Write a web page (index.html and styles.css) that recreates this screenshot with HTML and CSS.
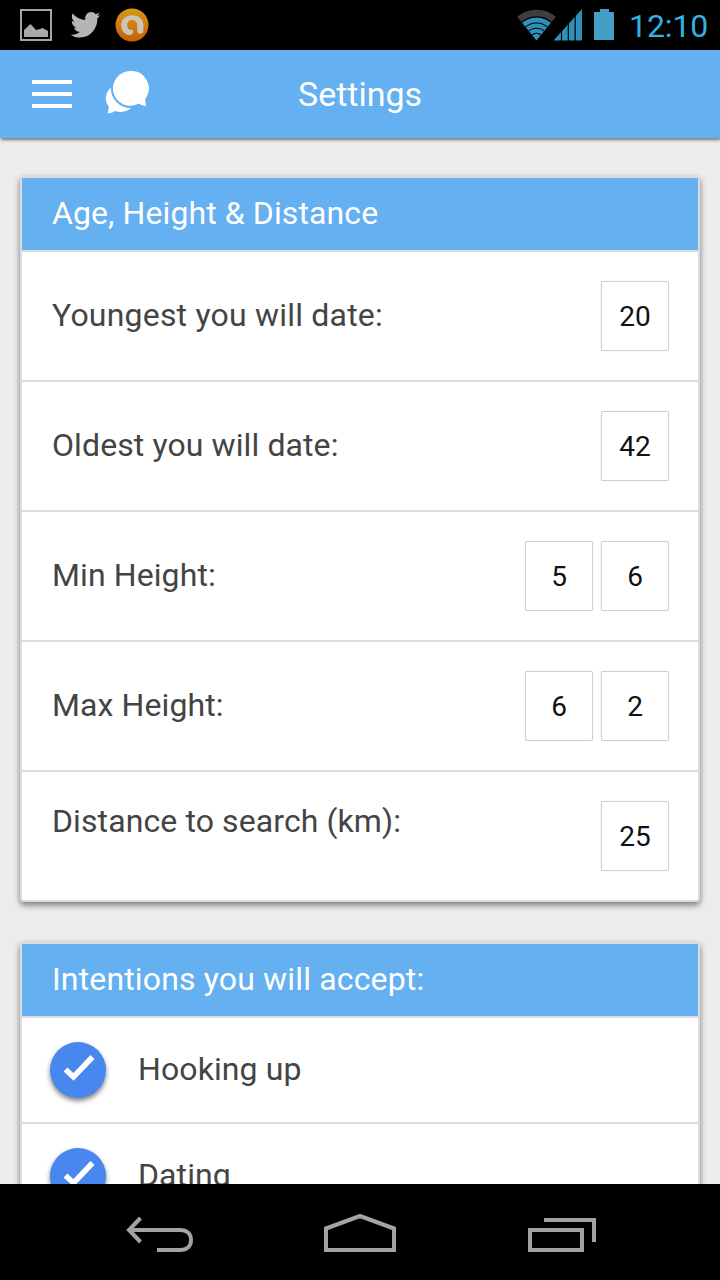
FILE: index.html
```html
<!DOCTYPE html>
<html lang="en">
<head>
<meta charset="utf-8">
<title>Settings</title>
<link rel="stylesheet" href="styles.css">
</head>
<body>
<div class="statusbar">
  <svg class="status-left" width="160" height="50" viewBox="0 0 160 50">
    <rect x="21" y="10" width="30" height="30" fill="none" stroke="#a5a5a5" stroke-width="2"/>
    <path d="M24 37v-7l6.500-6 5.500 6 2.500-.5 4-1.500 5.500 3v6z" fill="#a9a9a9"/>
    <path transform="translate(69.400 8.300) scale(1.310 1.380)" fill="#b5b5b5" d="M23.640 4.937c-.835.370-1.732.620-2.675.733.962-.576 1.700-1.490 2.048-2.578-.900.534-1.897.922-2.958 1.130-.850-.904-2.060-1.470-3.400-1.470-2.572 0-4.658 2.086-4.658 4.660 0 .364.042.718.120 1.060-3.873-.195-7.304-2.050-9.602-4.868-.400.690-.630 1.490-.630 2.342 0 1.616.823 3.043 2.072 3.878-.764-.025-1.482-.234-2.110-.583v.060c0 2.257 1.605 4.140 3.737 4.568-.392.106-.803.162-1.227.162-.300 0-.593-.028-.877-.082.593 1.850 2.313 3.198 4.352 3.234-1.595 1.250-3.604 1.995-5.786 1.995-.376 0-.747-.022-1.112-.065 2.062 1.323 4.510 2.093 7.140 2.093 8.570 0 13.255-7.098 13.255-13.254 0-.200-.005-.402-.014-.602.910-.658 1.700-1.477 2.323-2.410z"/>
    <defs><linearGradient id="orange" x1="0" y1="0" x2="0" y2="1"><stop offset="0" stop-color="#d69a12"/><stop offset="1" stop-color="#c85f06"/></linearGradient></defs>
    <circle cx="132" cy="25" r="16.500" fill="url(#orange)"/>
    <path d="M132.500 29.500c-3.500 1-5.300-1.500-5.300-4.300 0-3 2-5.200 5-5.200s5 2.200 5 5.200v5.300c0 2.200 1 3.300 3 3.300 2.200 0 3.200-1.200 3.200-3.800v-5c0-6-4.700-9.800-11.200-9.800-6.300 0-11 4.300-11 10.100 0 5.500 3.500 9.700 8.500 9.700 3.200 0 4.500-3.500 2.800-5.500z" fill="#cbc4bc"/>
  </svg>
  <div class="status-right">
    <svg width="100" height="32" viewBox="516 9 100 32">
      <defs><clipPath id="fan"><path d="M536.500 40.500 516.500 16V9h40v7z"/></clipPath></defs>
      <g clip-path="url(#fan)" fill="none">
        <circle cx="536.500" cy="40" r="27" stroke="#3e3e3e" stroke-width="6.500"/>
        <circle cx="536.500" cy="40" r="22.500" fill="#2f91b9"/>
        <g stroke="#000" stroke-width="1.100"><circle cx="536.500" cy="40" r="17"/><circle cx="536.500" cy="40" r="11.800"/><circle cx="536.500" cy="40" r="6.800"/></g>
      </g>
      <path d="M553.500 40.500 582 9v31.500z" fill="#2f91b9"/>
      <path d="M561.500 9v32M568.300 9v32M575.200 9v32" stroke="#000" stroke-width="1.200"/>
      <path d="M594 12h6V9h9v3h5v28h-20z" fill="#449fc6"/>
    </svg>
    <span class="clock">12:10</span>
  </div>
</div>
<main class="screen">
  <header class="appbar">
    <svg width="40" height="28" viewBox="0 0 40 28" fill="#fff"><path d="M0 0h40v4H0zM0 12h40v4H0zM0 24h40v4H0z"/></svg>
    <svg class="chat" width="44" height="44" viewBox="106 70 44 44" fill="#fff">
      <path d="M112.500 87c-4.500 3.500-6.300 9-5.400 14 .4 2 1.200 3.800 2.500 5.300.3 2-.1 4.500-1 7.300 2.500-.2 5.500-1.200 7.700-2.500 6 2 13 .8 17.500-5z"/>
      <circle cx="131.500" cy="88.300" r="19.700" fill="#64b0f0"/>
      <path d="M131.500 71a17.400 17.400 0 1 0 8.300 32.600c2.200 1.300 4.500 2.200 7.500 2.600-.9-2.500-1.100-5-.9-7.500A17.400 17.400 0 0 0 131.500 71z"/>
    </svg>
    <h1 class="title">Settings</h1>
  </header>
  <section class="card">
    <h2 class="card-title age">Age, Height &amp; Distance</h2>
    <div class="row"><span class="label youngest">Youngest you will date:</span><span class="value">20</span></div>
    <div class="row"><span class="label">Oldest you will date:</span><span class="value">42</span></div>
    <div class="row"><span class="label">Min Height:</span><span class="value">5</span><span class="value">6</span></div>
    <div class="row"><span class="label">Max Height:</span><span class="value">6</span><span class="value">2</span></div>
    <div class="row"><span class="label distance">Distance to search (km):</span><span class="value">25</span></div>
  </section>
  <section class="card">
    <h2 class="card-title intentions">Intentions you will accept:</h2>
    <div class="row option"><span class="check"><svg width="56" height="56" viewBox="0 0 56 56"><path d="m15.500 27.500 8 7.500 19-20" fill="none" stroke="#fff" stroke-width="5.500"/></svg></span><span class="label">Hooking up</span></div>
    <div class="row option"><span class="check"><svg width="56" height="56" viewBox="0 0 56 56"><path d="m15.500 27.500 8 7.500 19-20" fill="none" stroke="#fff" stroke-width="5.500"/></svg></span><span class="label">Dating</span></div>
  </section>
</main>
<nav class="navbar">
  <svg width="720" height="96" viewBox="0 1184 720 96" fill="none" stroke="#a3a3a3" stroke-width="4">
    <path d="m140.500 1218-11.500 12 11.500 12M129 1230h51c7 0 11 4 11 10s-4 10-11 10h-23"/>
    <path d="M326 1228.500 360 1216l34 12.500V1250h-68z"/>
    <path d="M530 1230h52v20h-52zM544 1220h50v22"/>
  </svg>
</nav>
</body>
</html>
```
FILE: styles.css
```css
* { box-sizing: border-box; }
body {
  margin: 0;
  width: 720px;
  height: 1280px;
  overflow: hidden;
  display: flex;
  flex-direction: column;
  font-family: Roboto, sans-serif;
  background: #000;
}
h1, h2 { margin: 0; font-weight: 400; }
svg { display: block; flex: none; }
.statusbar {
  height: 50px;
  flex: none;
  display: flex;
  justify-content: space-between;
  background: #000;
}
.status-right { display: flex; padding: 9px 11px 0 0; }
.clock {
  width: 80px;
  margin-left: 13px;
  line-height: 34px;
  font-size: 32px;
  letter-spacing: -.1px;
  color: #35b0e0;
  white-space: nowrap;
}
.screen {
  height: 1134px;
  flex: none;
  overflow: hidden;
  background: #ececec;
}
.appbar {
  height: 88px;
  margin-bottom: 38px;
  padding-left: 32px;
  display: flex;
  align-items: center;
  background: #64b0f0;
  box-shadow: 1px 2px 3px rgba(0, 0, 0, .5);
}
.chat { margin: 0 1px 4px 33px; }
.title {
  margin-left: 148px;
  line-height: 88px;
  font-size: 34px;
  color: #fff;
}
.card {
  margin: 0 20px 40px;
  border: 2px solid #dcdcdc;
  border-radius: 4px;
  background: #fff;
  box-shadow: 0 3px 6px rgba(0, 0, 0, .5);
}
.card-title {
  height: 72px;
  padding-left: 30px;
  line-height: 70px;
  font-size: 32px;
  letter-spacing: .1px;
  color: #fff;
  background: #64b0f0;
}
.intentions { letter-spacing: .15px; }
.row {
  height: 130px;
  padding: 0 29px 0 30px;
  display: flex;
  align-items: center;
  gap: 8px;
  border-top: 2px solid #dcdcdc;
}
.label {
  flex: 1;
  margin-bottom: 2px;
  font-size: 32px;
  line-height: 38px;
  letter-spacing: .1px;
  color: #444;
  white-space: nowrap;
}
.youngest { letter-spacing: .2px; }
.distance { margin-bottom: 30px; }
.value {
  width: 68px;
  height: 70px;
  padding-top: 1px;
  line-height: 70px;
  font-size: 28px;
  text-align: center;
  color: #111;
  border-radius: 2px;
  box-shadow: inset 0 0 0 1px #d0d0d0, 0 0 1px #ccc;
}
.option {
  height: 106px;
  padding-left: 28px;
  gap: 32px;
}
.check {
  width: 56px;
  height: 56px;
  border-radius: 50%;
  background: #4887ee;
  box-shadow: 0 3px 5px rgba(0, 0, 0, .5);
}
.navbar { height: 96px; flex: none; background: #000; }
```
